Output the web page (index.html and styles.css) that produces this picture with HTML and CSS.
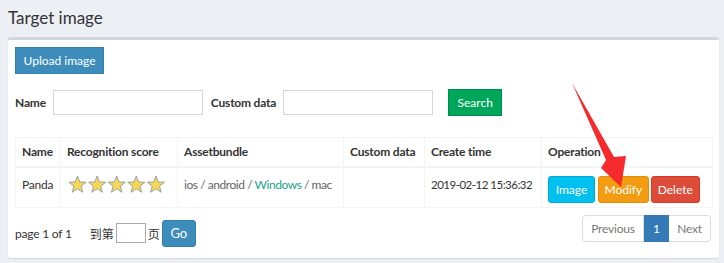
FILE: index.html
```html
<!DOCTYPE html>
<html lang="en">
<head>
    <meta charset="UTF-8">
    <title>Target image</title>
    <link rel="stylesheet" href="styles.css">
</head>
<body>
    <h1 class="page-title">Target image</h1>
    <div class="box">
        <button class="btn btn-primary upload-btn">Upload image</button>

        <div class="search-row">
            <label class="field-label">Name</label>
            <input type="text" class="field-input">
            <label class="field-label label-custom">Custom data</label>
            <input type="text" class="field-input">
            <button class="btn btn-success search-btn">Search</button>
        </div>

        <table class="targets">
            <colgroup>
                <col class="col-name">
                <col class="col-score">
                <col class="col-bundle">
                <col class="col-custom">
                <col class="col-time">
                <col>
            </colgroup>
            <thead>
                <tr>
                    <th>Name</th>
                    <th>Recognition score</th>
                    <th>Assetbundle</th>
                    <th>Custom data</th>
                    <th>Create time</th>
                    <th>Operation</th>
                </tr>
            </thead>
            <tbody>
                <tr>
                    <td>Panda</td>
                    <td class="stars">
                        <svg width="100" height="19" viewBox="0 0 100 19">
                            <defs>
                                <path id="star" d="M9.5 1 L11.73 6.93 L18.06 7.22 L13.11 11.17 L14.79 17.28 L9.5 13.8 L4.21 17.28 L5.89 11.17 L0.94 7.22 L7.27 6.93 Z"/>
                            </defs>
                            <use href="#star" x="0" class="star"/>
                            <use href="#star" x="19.6" class="star"/>
                            <use href="#star" x="39.2" class="star"/>
                            <use href="#star" x="58.8" class="star"/>
                            <use href="#star" x="78.4" class="star"/>
                        </svg>
                    </td>
                    <td class="bundle">ios / android / <span class="on">Windows</span> / mac</td>
                    <td></td>
                    <td class="time">2019-02-12 15:36:32</td>
                    <td class="ops">
                        <button class="btn btn-info btn-image">Image</button>
                        <button class="btn btn-warning btn-modify">Modify</button>
                        <button class="btn btn-danger btn-delete">Delete</button>
                    </td>
                </tr>
            </tbody>
        </table>

        <div class="pager-row">
            <div class="jump">
                <span class="page-info">page 1 of 1</span>
                <span class="cn">到第</span>
                <input type="text" class="page-input">
                <span class="cn">页</span>
                <button class="btn btn-primary go-btn">Go</button>
            </div>
            <ul class="pagination">
                <li class="prev"><a href="#">Previous</a></li>
                <li class="active"><a href="#">1</a></li>
                <li class="next"><a href="#">Next</a></li>
            </ul>
        </div>
    </div>

    <svg class="arrow" width="724" height="263" viewBox="0 0 724 263">
        <polygon points="572,83 606,160 601,168 621,187 626,156 614,157" fill="#f42a2d"/>
    </svg>
</body>
</html>
```

FILE: styles.css
```css
body {
    margin: 0;
    background: #ecf0f5;
    font-family: "Lato", "Noto Sans CJK SC", sans-serif;
    font-size: 12px;
    letter-spacing: -0.2px;
    color: #333;
    position: relative;
    width: 724px;
    height: 263px;
    overflow: hidden;
}
.page-title {
    margin: 0;
    padding: 6px 8px 0;
    height: 31px;
    font-size: 17px;
    font-weight: 400;
    line-height: 24px;
    letter-spacing: 0;
    color: #333;
}
.box {
    margin: 0 5px 0 8px;
    background: #fff;
    border-top: 3px solid #d2d6de;
    border-radius: 3px;
    box-shadow: 0 1px 1px rgba(0, 0, 0, 0.1);
    padding: 7px 6px 11px 7px;
}
.btn {
    font-family: inherit;
    font-size: 12px;
    letter-spacing: 0;
    color: #fff;
    border: 1px solid transparent;
    border-radius: 0;
    height: 27px;
    padding: 0;
    white-space: nowrap;
    cursor: pointer;
}
.btn-primary {
    background: #3c8dbc;
    border-color: #367fa9;
}
.btn-success {
    background: #00a65a;
    border-color: #008d4c;
}
.btn-info {
    background: #00c0ef;
    border-color: #00acd6;
    border-radius: 3px;
}
.btn-warning {
    background: #f39c12;
    border-color: #e08e0b;
    border-radius: 3px;
}
.btn-danger {
    background: #dd4b39;
    border-color: #d73925;
    border-radius: 3px;
}
.upload-btn {
    width: 89px;
    display: block;
}
.search-row {
    display: flex;
    align-items: center;
    margin-top: 15px;
    height: 27px;
}
.field-label {
    font-weight: 700;
    margin-right: 7px;
}
.label-custom {
    margin-left: 8px;
}
.field-input {
    width: 150px;
    height: 25px;
    box-sizing: border-box;
    border: 1px solid #d2d6de;
    padding: 0 6px;
    margin: 0;
}
.search-btn {
    width: 54px;
    margin-left: 15px;
}
.targets {
    margin-top: 21px;
    width: 698px;
    border-collapse: collapse;
    border: 1px solid #f4f4f4;
    table-layout: fixed;
}
.col-name { width: 45px; }
.col-score { width: 117px; }
.col-bundle { width: 166px; }
.col-custom { width: 81px; }
.col-time { width: 117px; }
.targets th,
.targets td {
    border: 1px solid #f4f4f4;
    padding: 0 6px;
    text-align: left;
    vertical-align: top;
    white-space: nowrap;
    overflow: hidden;
}
.targets th {
    height: 26px;
    line-height: 28px;
    border-bottom-width: 2px;
    font-weight: 700;
}
.targets td {
    height: 40px;
    line-height: 18px;
    padding-top: 8px;
    box-sizing: border-box;
}
.targets td.stars {
    padding-top: 7px;
    padding-left: 7px;
}
.stars svg {
    display: block;
}
.star {
    fill: #f7d754;
    stroke: #8e9aab;
    stroke-width: 0.9;
}
.bundle {
    color: #666;
    letter-spacing: -0.45px;
}
.bundle .on {
    color: #1aa58a;
}
.time {
    font-size: 11.5px;
    letter-spacing: -0.5px;
}
.targets td.ops {
    padding-left: 6px;
}
.ops .btn {
    vertical-align: top;
}
.btn-image { width: 47px; }
.btn-modify { width: 51px; }
.btn-delete { width: 49px; margin-left: -1px; }
.pager-row {
    display: flex;
    justify-content: space-between;
    margin-top: 7px;
}
.jump {
    display: flex;
    align-items: center;
    margin-top: 5px;
}
.page-info {
    margin-right: 16px;
}
.cn {
    margin: 0 2px;
    font-size: 12px;
    letter-spacing: 0;
}
.page-input {
    width: 30px;
    height: 20px;
    box-sizing: border-box;
    border: 1px solid #aaa;
    margin: 0;
}
.go-btn {
    width: 34px;
    border-radius: 3px;
    font-size: 13px;
}
.pagination {
    display: flex;
    list-style: none;
    margin: 0 2px 0 0;
    padding: 0;
}
.pagination a {
    display: block;
    box-sizing: border-box;
    height: 27px;
    line-height: 25px;
    text-align: center;
    border: 1px solid #ddd;
    color: #777;
    text-decoration: none;
    background: #fff;
}
.pagination .prev a {
    width: 62px;
    border-radius: 4px 0 0 4px;
}
.pagination .active a {
    width: 25px;
    background: #337ab7;
    border-color: #337ab7;
    color: #fff;
}
.pagination .next a {
    width: 42px;
    border-radius: 0 4px 4px 0;
    border-left: none;
}
.arrow {
    position: absolute;
    left: 0;
    top: 0;
    pointer-events: none;
}
```
